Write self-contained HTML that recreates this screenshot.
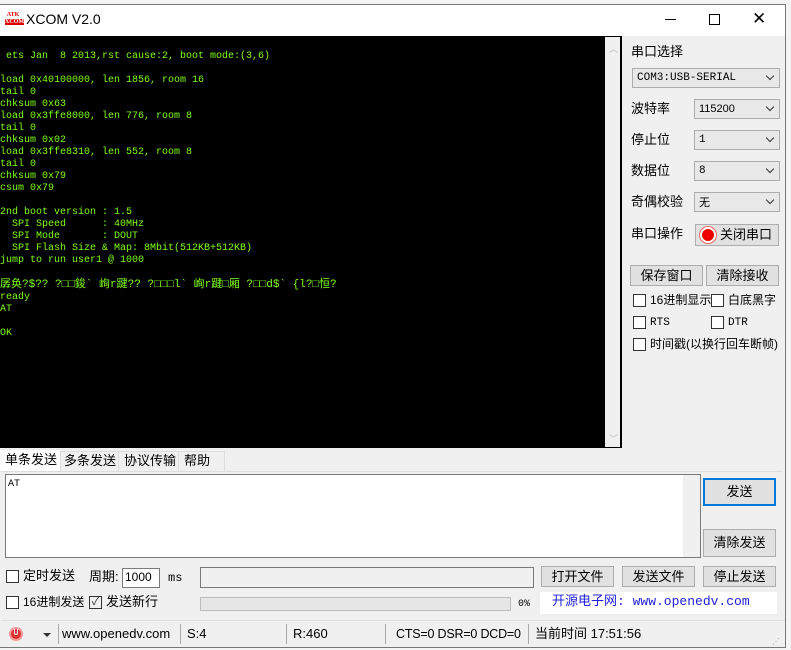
<!DOCTYPE html>
<html><head><meta charset="utf-8"><style>
*{margin:0;padding:0;box-sizing:border-box}
body{width:791px;height:650px;background:#f4f4f4;position:relative;overflow:hidden;font-family:"Liberation Sans","Noto Sans CJK SC",sans-serif;font-size:12px;color:#000;line-height:15px}
.a{position:absolute}
.win{left:0;top:4px;width:786px;height:644px;background:#f0f0f0;border:1px solid #777;border-left:none}
.title{left:0;top:5px;width:785px;height:31px;background:#fff}
.term{left:0;top:37px;width:606px;height:410px;background:#000;color:#80ff10;font-family:"Liberation Mono","Noto Sans CJK SC",monospace;font-size:10px;line-height:12px;white-space:pre;padding-top:14px;overflow:hidden}
.sb{left:605px;top:37px;width:16px;height:410px;background:#f0f0f0;border-right:1px solid #000}
.tbox{left:0;top:36px;width:622px;height:412px;border:1px solid #000;border-left:none}
.lbl{font-size:13px;line-height:16px}
.sel{background:#e8e8e8;border:1px solid #adadad;height:20px;font-family:"Liberation Mono","Noto Sans CJK SC",monospace;font-size:11px;padding:2px 4px;line-height:15px}
.sel:after{content:"";position:absolute;right:6px;top:4px;width:5px;height:5px;border-right:1px solid #333;border-bottom:1px solid #333;transform:rotate(45deg)}
.btn{background:#e1e1e1;border:1px solid #adadad;text-align:center;font-size:13px}
.cb{width:13px;height:13px;border:1px solid #333;background:#fff}
.mono{font-family:"Liberation Mono","Noto Sans CJK SC",monospace}
</style></head><body>
<div class="a win"></div>
<div class="a title"></div>
<div class="a" style="left:5px;top:12px;width:16px;height:14px;color:#d00;font-size:6px;line-height:7px;font-weight:bold;text-align:center;font-family:'Liberation Serif',serif">ATK<br><span style="background:#d00;color:#fff">XCOM</span></div>
<div class="a" style="left:26px;top:11px;font-size:14px;line-height:17px">XCOM V2.0</div>
<div class="a" style="left:665px;top:19px;width:11px;height:1px;background:#000"></div>
<div class="a" style="left:709px;top:14px;width:11px;height:11px;border:1px solid #000"></div>
<div class="a" style="left:752px;top:9px;font-size:17px;line-height:20px">✕</div>

<div class="a term"> ets Jan  8 2013,rst cause:2, boot mode:(3,6)

load 0x40100000, len 1856, room 16
tail 0
chksum 0x63
load 0x3ffe8000, len 776, room 8
tail 0
chksum 0x02
load 0x3ffe8310, len 552, room 8
tail 0
chksum 0x79
csum 0x79

2nd boot version : 1.5
  SPI Speed      : 40MHz
  SPI Mode       : DOUT
  SPI Flash Size &amp; Map: 8Mbit(512KB+512KB)
jump to run user1 @ 1000

<span style="font-size:11px">孱奂?$?? ?□□鋑` 峋r踺?? ?□□□l` 峋r踺□厢 ?□□d$` {l?□恒?</span>
ready
AT

OK</div>
<div class="a sb"></div>
<div class="a tbox"></div>
<div class="a" style="left:609px;top:42px;color:#bbb;font-size:9px">︿</div>
<div class="a" style="left:609px;top:432px;color:#bbb;font-size:9px">﹀</div>

<div class="a lbl" style="left:631px;top:44px">串口选择</div>
<div class="a sel" style="left:632px;top:68px;width:148px">COM3:USB-SERIAL</div>
<div class="a lbl" style="left:631px;top:101px">波特率</div>
<div class="a sel" style="left:694px;top:99px;width:86px;font-family:'Liberation Sans',sans-serif">115200</div>
<div class="a lbl" style="left:631px;top:132px">停止位</div>
<div class="a sel" style="left:694px;top:130px;width:86px">1</div>
<div class="a lbl" style="left:631px;top:163px">数据位</div>
<div class="a sel" style="left:694px;top:161px;width:86px">8</div>
<div class="a lbl" style="left:631px;top:194px">奇偶校验</div>
<div class="a sel" style="left:694px;top:192px;width:86px;font-family:'Noto Sans CJK SC',sans-serif">无</div>
<div class="a lbl" style="left:631px;top:226px">串口操作</div>
<div class="a btn" style="left:695px;top:224px;width:84px;height:22px;line-height:20px;padding-left:18px">关闭串口</div>
<div class="a" style="left:702px;top:229px;width:12px;height:12px;border-radius:50%;background:#e00;box-shadow:0 0 0 2px #fff,0 0 0 3px #e66"></div>
<div class="a btn" style="left:630px;top:265px;width:73px;height:21px;line-height:19px">保存窗口</div>
<div class="a btn" style="left:706px;top:265px;width:73px;height:21px;line-height:19px">清除接收</div>
<div class="a cb" style="left:633px;top:294px"></div><div class="a" style="left:650px;top:293px;font-size:12px">16进制显示</div>
<div class="a cb" style="left:711px;top:294px"></div><div class="a" style="left:728px;top:293px;font-size:12px">白底黑字</div>
<div class="a cb" style="left:633px;top:316px"></div><div class="a mono" style="left:650px;top:316px;font-size:11px">RTS</div>
<div class="a cb" style="left:711px;top:316px"></div><div class="a mono" style="left:728px;top:316px;font-size:11px">DTR</div>
<div class="a cb" style="left:633px;top:338px"></div><div class="a" style="left:650px;top:337px;font-size:12px">时间戳(以换行回车断帧)</div>

<!-- tabs -->
<div class="a" style="left:0;top:450px;width:60px;height:21px;background:#fff"></div>
<div class="a lbl" style="left:5px;top:452px">单条发送</div>
<div class="a" style="left:60px;top:451px;width:165px;height:20px;background:#f0f0f0;border:1px solid #ddd;border-bottom:none"></div>
<div class="a lbl" style="left:64px;top:453px">多条发送</div>
<div class="a" style="left:118px;top:451px;width:1px;height:20px;background:#ddd"></div>
<div class="a lbl" style="left:124px;top:453px">协议传输</div>
<div class="a" style="left:178px;top:451px;width:1px;height:20px;background:#ddd"></div>
<div class="a lbl" style="left:184px;top:453px">帮助</div>
<div class="a" style="left:1px;top:471px;width:782px;height:1px;background:#ddd"></div>

<div class="a" style="left:5px;top:474px;width:696px;height:84px;background:#fff;border:1px solid #7a7a7a"></div>
<div class="a" style="left:683px;top:475px;width:17px;height:82px;background:#f0f0f0"></div>
<div class="a mono" style="left:8px;top:477px;font-size:10px">AT</div>
<div class="a btn" style="left:703px;top:478px;width:73px;height:28px;line-height:24px;border:2px solid #0078d7">发送</div>
<div class="a btn" style="left:703px;top:529px;width:73px;height:28px;line-height:26px">清除发送</div>

<div class="a cb" style="left:6px;top:570px"></div><div class="a lbl" style="left:23px;top:568px">定时发送</div>
<div class="a lbl" style="left:89px;top:569px">周期:</div>
<div class="a" style="left:122px;top:568px;width:38px;height:20px;background:#fff;border:1px solid #7a7a7a;font-size:12px;padding:1px 2px">1000</div>
<div class="a mono" style="left:168px;top:571px;font-size:12px">ms</div>
<div class="a" style="left:200px;top:567px;width:334px;height:21px;background:#f0f0f0;border:1px solid #7a7a7a"></div>
<div class="a btn" style="left:541px;top:566px;width:73px;height:21px;line-height:19px">打开文件</div>
<div class="a btn" style="left:622px;top:566px;width:73px;height:21px;line-height:19px">发送文件</div>
<div class="a btn" style="left:703px;top:566px;width:73px;height:21px;line-height:19px">停止发送</div>

<div class="a cb" style="left:6px;top:596px"></div><div class="a" style="left:23px;top:595px;font-size:12px">16进制发送</div>
<div class="a cb" style="left:89px;top:596px;background:#f0f0f0;color:#333;font-size:11px;line-height:11px;text-align:center">✓</div><div class="a lbl" style="left:106px;top:594px">发送新行</div>
<div class="a" style="left:200px;top:597px;width:311px;height:14px;background:#e6e6e6;border:1px solid #bcbcbc"></div>
<div class="a mono" style="left:518px;top:597px;font-size:10px">0%</div>
<div class="a" style="left:540px;top:592px;width:237px;height:22px;background:#fff"></div>
<div class="a" style="left:552px;top:594px;color:#2020e0;font-family:'Liberation Mono','Noto Sans CJK SC',monospace;font-size:13px;white-space:pre">开源电子网: www.openedv.com</div>

<!-- status -->
<div class="a" style="left:1px;top:620px;width:784px;height:1px;background:#ddd"></div>
<div class="a" style="left:9px;top:627px;width:14px;height:14px;border-radius:50%;background:#d33;border:2px solid #f99"></div>
<div class="a" style="left:14px;top:629px;width:4px;height:6px;border:1px solid #fff;border-top:none;border-radius:0 0 3px 3px"></div>
<div class="a" style="left:43px;top:633px;border:4px solid transparent;border-top:4px solid #333"></div>
<div class="a" style="left:58px;top:624px;width:1px;height:20px;background:#aaa"></div>
<div class="a lbl" style="left:62px;top:626px">www.openedv.com</div>
<div class="a" style="left:180px;top:624px;width:1px;height:20px;background:#aaa"></div>
<div class="a lbl" style="left:187px;top:626px">S:4</div>
<div class="a" style="left:286px;top:624px;width:1px;height:20px;background:#aaa"></div>
<div class="a lbl" style="left:293px;top:626px">R:460</div>
<div class="a" style="left:385px;top:624px;width:1px;height:20px;background:#aaa"></div>
<div class="a lbl" style="left:396px;top:626px;font-size:12.5px;letter-spacing:-0.2px">CTS=0 DSR=0 DCD=0</div>
<div class="a" style="left:528px;top:624px;width:1px;height:20px;background:#aaa"></div>
<div class="a lbl" style="left:535px;top:626px">当前时间 17:51:56</div>
<div class="a" style="left:772px;top:634px;color:#aaa;font-size:8px;letter-spacing:-1px">⋰</div>
</body></html>
